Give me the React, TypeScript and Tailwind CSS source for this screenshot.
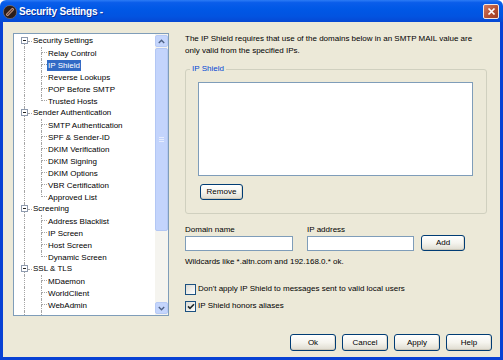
import React from "react";

type Item = { label: string; parent?: boolean; last?: boolean; selected?: boolean };

const items: Item[] = [
  { label: "Security Settings", parent: true },
  { label: "Relay Control" },
  { label: "IP Shield", selected: true },
  { label: "Reverse Lookups" },
  { label: "POP Before SMTP" },
  { label: "Trusted Hosts", last: true },
  { label: "Sender Authentication", parent: true },
  { label: "SMTP Authentication" },
  { label: "SPF & Sender-ID" },
  { label: "DKIM Verification" },
  { label: "DKIM Signing" },
  { label: "DKIM Options" },
  { label: "VBR Certification" },
  { label: "Approved List", last: true },
  { label: "Screening", parent: true },
  { label: "Address Blacklist" },
  { label: "IP Screen" },
  { label: "Host Screen" },
  { label: "Dynamic Screen", last: true },
  { label: "SSL & TLS", parent: true },
  { label: "MDaemon" },
  { label: "WorldClient" },
  { label: "WebAdmin" },
  { label: "WebMail" },
];

function TreeRow({ item, first }: { item: Item; first: boolean }) {
  if (item.parent) {
    return (
      <div className="flex h-[12px] items-stretch">
        <div className="w-[7px]" />
        <div className="flex w-[7px] flex-col items-center">
          <div className={"h-[2px] w-0 " + (first ? "" : "border-l border-dotted border-[#A5A5A5]")} />
          <div className="flex h-[7px] w-[7px] items-center justify-center border border-[#8E9AAE] bg-white">
            <div className="h-px w-[3px] bg-[#222]" />
          </div>
          <div className="w-0 flex-1 border-l border-dotted border-[#A5A5A5]" />
        </div>
        <div className="flex w-[4px] items-center">
          <div className="w-full border-t border-dotted border-[#A5A5A5]" />
        </div>
        <span className="pl-[1px] text-[8px] leading-[12px] text-black whitespace-nowrap">{item.label}</span>
      </div>
    );
  }
  return (
    <div className="flex h-[12px] items-stretch">
      <div className="w-[10px]" />
      <div className="w-0 border-l border-dotted border-[#A5A5A5]" />
      <div className="w-[16px]" />
      <div className="flex w-[6px] flex-col">
        <div className="h-[6px] border-l border-b border-dotted border-[#A5A5A5]" />
        <div className={"flex-1 " + (item.last ? "" : "border-l border-dotted border-[#A5A5A5]")} />
      </div>
      <span
        className={
          "my-[0.5px] px-[1px] text-[8px] leading-[11px] whitespace-nowrap " +
          (item.selected ? "bg-[#316AC5] text-white" : "text-black")
        }
      >
        {item.label}
      </span>
    </div>
  );
}

function Chevron({ up }: { up: boolean }) {
  return (
    <svg width="7" height="5" viewBox="0 0 7 5">
      <path
        d={up ? "M0.8 4 L3.5 1.3 L6.2 4" : "M0.8 1 L3.5 3.7 L6.2 1"}
        fill="none"
        stroke="#4D6185"
        strokeWidth="1.4"
      />
    </svg>
  );
}

function ScrollBar() {
  return (
    <div className="flex w-[13px] flex-col bg-[#F5F4EF] pt-[1px] pb-[1px]">
      <div className="flex h-[12px] items-center justify-center rounded-[2px] border border-[#B7CAF5] bg-[#C4D5FC]">
        <Chevron up />
      </div>
      <div className="mt-px flex h-[183px] items-center justify-center rounded-[2px] border border-[#B3C7F4] bg-[#C3D4FC]">
        <div className="flex flex-col gap-[1px]">
          <div className="h-px w-[5px] bg-[#E6EDFE]" />
          <div className="h-px w-[5px] bg-[#E6EDFE]" />
          <div className="h-px w-[5px] bg-[#E6EDFE]" />
        </div>
      </div>
      <div className="flex-1" />
      <div className="flex h-[12px] items-center justify-center rounded-[2px] border border-[#B7CAF5] bg-[#C4D5FC]">
        <Chevron up={false} />
      </div>
    </div>
  );
}

function XPButton({ children, w, h = 17 }: { children: React.ReactNode; w: string; h?: number }) {
  return (
    <button
      className={
        w +
        (h === 16 ? " h-[16px]" : " h-[17px]") +
        " rounded-[3px] border border-[#003C74] bg-gradient-to-b from-white via-[#F5F4EE] to-[#DEDBCF] text-[8px] leading-none text-black shadow-[inset_0_-1px_0_#CDC8BA,inset_-1px_0_0_#E0DCD0]"
      }
    >
      {children}
    </button>
  );
}

function Checkbox({ checked }: { checked: boolean }) {
  return (
    <div className="flex h-[11px] w-[11px] items-center justify-center border border-[#1C5180] bg-gradient-to-br from-[#DCDBD3] to-white">
      {checked && (
        <svg width="8" height="7" viewBox="0 0 8 7">
          <path d="M1 3.4 L3 5.4 L7 1.2" fill="none" stroke="#1F2A2A" strokeWidth="1.6" />
        </svg>
      )}
    </div>
  );
}

export default function App() {
  return (
    <div className="flex h-[360px] w-[503px] flex-col overflow-hidden font-['Liberation_Sans',Arial,sans-serif]">
      {/* Title bar */}
      <div className="flex h-[22px] items-center rounded-t-[6px] bg-[linear-gradient(to_bottom,#2C7BF5_0%,#0A5DEA_12%,#0058E6_40%,#0253E0_75%,#0648D3_100%)] pl-[3px] pr-[4px]">
        <svg width="14" height="14" viewBox="0 0 14 14" className="mt-[1px]">
          <circle cx="7" cy="7" r="6.6" fill="#2B1D1A" stroke="#8D7A70" strokeWidth="0.6" />
          <rect x="5.5" y="2" width="3" height="10" rx="1.2" fill="#C79A85" transform="rotate(45 7 7)" />
          <rect x="6.4" y="3" width="1.2" height="8" fill="#5B3B32" transform="rotate(45 7 7)" />
        </svg>
        <span className="ml-[2px] text-[10px] font-bold tracking-[-0.2px] text-white [text-shadow:1px_1px_0_#0B2F99]">
          Security Settings -
        </span>
        <div className="flex-1" />
        <div className="mt-[1px] flex h-[15px] w-[16px] items-center justify-center rounded-[2px] border border-[#F3E6E0] bg-[linear-gradient(135deg,#D27A60,#B24E31_60%,#9C3E24)]">
          <svg width="9" height="9" viewBox="0 0 9 9">
            <path d="M1.5 1.5 L7.5 7.5 M7.5 1.5 L1.5 7.5" stroke="white" strokeWidth="1.7" />
          </svg>
        </div>
      </div>

      {/* Body */}
      <div className="flex flex-1 flex-col border-x-[3px] border-b-[3px] border-[#0841D4] bg-[#ECE9D8] pl-[10px] pt-[11px]">
        <div className="flex">
          {/* Tree */}
          <div className="flex h-[283px] w-[156px] border border-[#7F9DB9] bg-white">
            <div className="flex-1 overflow-hidden pt-[1px]">
              {items.map((it, i) => (
                <TreeRow key={i} item={it} first={i === 0} />
              ))}
            </div>
            <ScrollBar />
          </div>

          {/* Right column */}
          <div className="ml-[16px] flex w-[306px] flex-col text-[8px] leading-[12px] text-black">
            <p>
              The IP Shield requires that use of the domains below in an SMTP MAIL value are
              <br />
              only valid from the specified IPs.
            </p>

            <fieldset className="mt-[6px] w-[302px] rounded-[3px] border border-[#D0D0BF] pb-[13px] pl-[12px]">
              <legend className="-ml-[8px] px-[2px] text-[8px] leading-[12px] text-[#0046D5]">IP Shield</legend>
              <div className="mt-[7px] h-[94px] w-[275px] border border-[#7F9DB9] bg-white" />
              <div className="ml-[2px] mt-[8px]">
                <XPButton w="w-[43px]" h={16}>Remove</XPButton>
              </div>
            </fieldset>

            <div className="mt-[10px] flex items-end">
              <div className="flex w-[108px] flex-col">
                <span>Domain name</span>
                <div className="h-[15px] border border-[#7F9DB9] bg-white" />
              </div>
              <div className="ml-[14px] flex w-[107px] flex-col">
                <span>IP address</span>
                <div className="h-[15px] border border-[#7F9DB9] bg-white" />
              </div>
              <div className="ml-[7px]">
                <XPButton w="w-[44px]" h={16}>Add</XPButton>
              </div>
            </div>

            <p className="mt-[5px]">Wildcards like *.altn.com and 192.168.0.* ok.</p>

            <div className="mt-[15px] flex h-[12px] items-center gap-[2px]">
              <Checkbox checked={false} />
              <span>Don't apply IP Shield to messages sent to valid local users</span>
            </div>
            <div className="mt-[5px] flex h-[12px] items-center gap-[2px]">
              <Checkbox checked />
              <span>IP Shield honors aliases</span>
            </div>
          </div>
        </div>

        {/* Bottom buttons */}
        <div className="mt-[18px] flex justify-end gap-[6px] pr-[8px]">
          <XPButton w="w-[46px]">Ok</XPButton>
          <XPButton w="w-[46px]">Cancel</XPButton>
          <XPButton w="w-[46px]">Apply</XPButton>
          <XPButton w="w-[46px]">Help</XPButton>
        </div>
      </div>
    </div>
  );
}
